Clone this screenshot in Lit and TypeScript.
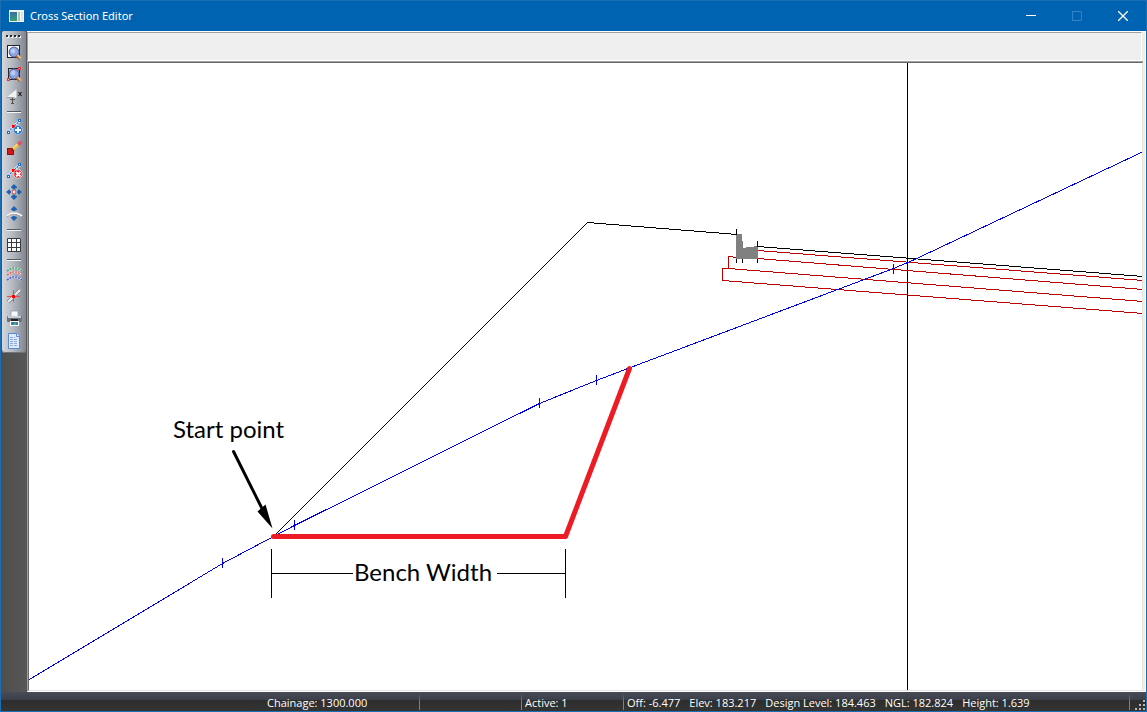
import { LitElement, html, svg, css, SVGTemplateResult } from "lit";
import { customElement } from "lit/decorators.js";

type Tool = { label: string; icon: SVGTemplateResult } | null;

const magnifier = svg`
  <circle cx="7" cy="7" r="4.800" fill="#8ea6e0" stroke="#5c6cb4" stroke-width="1.200"/>
  <circle cx="6" cy="6" r="2.400" fill="#b9cbf5"/>
  <path d="M10 10.500 13.500 14" stroke="#a86a3c" stroke-width="3.400"/>
  <path d="M10.500 10 14 13.500" stroke="#f0bd8c" stroke-width="1.800"/>`;

const node = (x: number, y: number, c = "#1c6fd0") =>
  svg`<rect x=${x} y=${y} width="2" height="2" fill="#fff" stroke=${c}/>`;

const segments = svg`
  <path d="M1 13 7 7 13 2" fill="none" stroke="#e8f0fa" stroke-width="2.400"/>
  <path d="M1 13 7 7 13 2" fill="none" stroke="#1c6fd0" stroke-width="1.200" stroke-dasharray="2 1"/>
  ${node(0.5, 12.5)}${node(11.5, 0.5)}
  <rect x="5" y="6" width="3" height="3" fill="#f00"/>`;

const wave = (y: number, c: string) => svg`
  <path d=${`M0 ${y + 4} 5 ${y + 1} 10 ${y + 1} 15 ${y + 4}`} fill="none" stroke="#e0e0e6" stroke-width="2.200"/>
  <path d=${`M0 ${y + 4} 5 ${y + 1} 10 ${y + 1} 15 ${y + 4}`} fill="none" stroke=${c} stroke-width="1.600" stroke-dasharray="2 1"/>`;

const tools: Tool[] = [
  {
    label: "Zoom window",
    icon: svg`<rect x=".5" y=".5" width="12" height="12" fill="#fff" stroke="#222"/>${magnifier}`,
  },
  {
    label: "Zoom extents",
    icon: svg`<rect x="1.500" y="1.500" width="11" height="11" fill="none" stroke="#222"/>${magnifier}
      <rect x="11" y="0" width="3" height="3" fill="#e8303a"/><rect x="12" y="1" width="1" height="1" fill="#ffb0b0"/>
      <rect x="0" y="11" width="3" height="3" fill="#e8303a"/><rect x="1" y="12" width="1" height="1" fill="#ffb0b0"/>`,
  },
  {
    label: "Section view",
    icon: svg`<path d="M0 8 10 0V10L6 9Z" fill="#f2f2f2"/><path d="M0 8.500H6L10 10V0" fill="none" stroke="#8a8c90" stroke-width=".8"/>
      <path d="M5.500 9V14M3 10.500H8M4 14.500H7" stroke="#555" stroke-width="1.200"/>
      <path d="M11.500 3 14.500 7M14.500 3 11.500 7" stroke="#222" stroke-width="1.200"/>`,
  },
  null,
  {
    label: "Add point",
    icon: svg`${segments}<circle cx="11" cy="11" r="4.500" fill="#2476d8" stroke="#a9cdf5" stroke-width=".8"/>
      <path d="M11 8V14M8 11H14" stroke="#fff" stroke-width="1.800"/>`,
  },
  {
    label: "Edit point",
    icon: svg`<rect x="0" y="7" width="7" height="7" fill="#8c1010"/><rect x="1" y="8" width="5" height="5" fill="#d81818"/>
      <path d="M4 10 6 6 8 9Z" fill="#5a3010"/><path d="M6 8 12 3" stroke="#f5bd45" stroke-width="3.500"/>
      <path d="M6 7 11 2.500" stroke="#fff0a0" stroke-width="1"/><path d="M11 3.500 14.500 1" stroke="#e05068" stroke-width="3.500"/>`,
  },
  {
    label: "Delete point",
    icon: svg`${segments}<path d="M8 7H13L15 9V13L13 15H9L7 13V9Z" fill="#e01820" stroke="#fff" stroke-width=".6"/>
      <path d="M9 9 13.500 13.500M13.500 9 9 13.500" stroke="#fff" stroke-width="1.800"/>`,
  },
  {
    label: "Move",
    icon: svg`<g fill="#1d62b4"><path d="M7 -1 10 2V3H8.500V4.500H5.500V3H4V2Z"/><path d="M7 15 10 12V11H8.500V9.500H5.500V11H4V12Z"/>
      <path d="M-1 7 2 4.500H3V6H4V8H3V9.500H2Z"/><path d="M15 7 12 4.500H11V6H10V8H11V9.500H12Z"/></g>
      <rect x="5.500" y="5.500" width="3" height="3" fill="#fff" stroke="#f26a6a"/>`,
  },
  {
    label: "Move vertically",
    icon: svg`<g fill="#1d62b4"><path d="M7 -1 10 2V3H8.500V4H5.500V3H4V2Z"/><path d="M7 14 10 11V10H8.500V9H5.500V10H4V11Z"/></g>
      <path d="M0 9 4 6.500H10L15 9" fill="none" stroke="#f4f4f4" stroke-width="2"/>
      <path d="M0 10 4 7.500H10L15 10" fill="none" stroke="#888" stroke-width=".8" stroke-dasharray="2 1"/>`,
  },
  null,
  {
    label: "Grid",
    icon: svg`<rect x="1" y="1" width="13" height="13" fill="#fff"/>
      <path d="M.5 1.500H13.500V14.500H.5ZM4.500 1V15M9.500 1V15M0 5.500H14M0 10.500H14" fill="none" stroke="#3a3a3e"/>`,
  },
  null,
  { label: "Layers", icon: svg`${wave(0, "#3aa860")}${wave(4, "#e86060")}${wave(9, "#4858d0")}` },
  {
    label: "Snap",
    icon: svg`<path d="M1 13 13 1" stroke="#777" stroke-width="3.600"/><path d="M1 13 13 1" stroke="#e8e8e8" stroke-width="2.400"/>
      <path d="M6.500 1V13M0 7.500H13" stroke="#f04848"/><rect x="5" y="6" width="3" height="3" fill="#f00"/>`,
  },
  {
    label: "Print",
    icon: svg`<rect x="4" y="0" width="7" height="6" fill="#f4f8ff" stroke="#8c9cb8" stroke-width=".8"/>
      <rect x="0" y="5" width="15" height="6" rx="1" fill="#6c7078"/><rect x="1" y="5" width="13" height="2" fill="#c8ccd4"/>
      <rect x="4" y="8" width="7" height="2" fill="#222"/><rect x="3" y="10" width="9" height="5" fill="#fff"/>
      <rect x="4" y="11" width="7" height="3" fill="#3c7cb0"/><rect x="7" y="12" width="2" height="2" fill="#48b078"/>`,
  },
  {
    label: "Report",
    icon: svg`<path d="M1.500 .5H9.500L12.500 3.500V15.500H1.500Z" fill="#dce9ff" stroke="#5c88d8"/>
      <path d="M9.500 .5V3.500H12.500" fill="#fff" stroke="#5c88d8"/>
      <path d="M3 4.500H8M3 6.500H11M3 8.500H11M3 10.500H11M3 12.500H11" stroke="#8ea8d8" stroke-dasharray="3 1"/>`,
  },
];

@customElement("section-canvas")
class SectionCanvas extends LitElement {
  static styles = css`
    :host { display: block; min-width: 0; min-height: 0; overflow: hidden; background: #fff; }
    .drawing { display: block; width: 100%; height: 100%; }
    .label { font: 24px Lato, "Open Sans", sans-serif; fill: #000; }
    .thin { fill: none; stroke-width: 1; shape-rendering: crispEdges; }
    .black { stroke: #000; }
    .red { stroke: #c00000; }
    .blue { stroke: #0000e6; }
    .bench { fill: none; stroke: #ed1c24; stroke-width: 5; stroke-linejoin: round; stroke-linecap: round; }
    .arrow { stroke: #000; stroke-width: 3; stroke-linecap: round; }
  `;

  render() {
    return html`
      <svg class="drawing" viewBox="29 63 1113 627" preserveAspectRatio="xMinYMin slice" role="img" aria-label="Cross section">
        <g transform="translate(.5 .5)">
          <path class="thin black" d="M907 62V691M274 535 587 222 737 234M757 246 1143 276"/>
          <path class="thin red" d="M757 250 1143 280M757 258 1143 289M737 257 728 256V268M1143 301 728 268H722V280L1143 313"/>
          <path class="thin blue" d="M29 679 222 563 273 536 294 525 539 403 596 380 630 367 893 268 912 260 1143 151
            M222 557V567M294 519V529M539 397V407M596 374V384M893 263V273"/>
          <path fill="#808080" d="M736 234H741V241H742V248L757 246V258H736Z" stroke="#808080" shape-rendering="crispEdges"/>
          <path class="thin black" d="M736 228V234M736 258V262M742 258V262M757 258V262M757 240V246"/>
          <path class="bench" d="M273 536H565L629 368"/>
          <path class="arrow" d="M233 451 263 511"/>
          <path d="M272 528 257 511 265 504Z"/>
          <path class="thin black" d="M271 548V597M565 548V597M271 573H352M496 573H565"/>
        </g>
        <text class="label" x="173" y="438">Start point</text>
        <text class="label" x="354" y="581">Bench Width</text>
      </svg>
    `;
  }
}

@customElement("app-root")
class AppRoot extends LitElement {
  static styles = css`
    :host {
      display: flex; flex-direction: column; box-sizing: border-box; height: 100vh;
      border: 1px solid #1a6fb4; overflow: hidden;
      font: 11px/16px "Open Sans", "Noto Sans", sans-serif; background: #505050;
    }
    .title { display: flex; align-items: center; height: 30px; flex: none; background: #0063b1; color: #fff; }
    .app-icon { width: 16px; height: 16px; margin: 0 6px 0 7px; flex: none; }
    .caption { flex: 1; margin: 0; font: 11px/16px "Noto Sans", sans-serif; }
    .win { width: 46px; height: 30px; padding: 0; border: 0; background: none; color: #fff; display: grid; place-items: center; }
    .win:disabled { color: #3384c4; }
    .win:hover:enabled { background: #1a73bb; }
    .body { flex: 1; min-height: 0; display: flex; }
    .rail { width: 26px; flex: none; background: linear-gradient(90deg, #4e4e4e, #575757); }
    .tools {
      display: flex; flex-direction: column; margin: 0 1px; padding: 4px 0 1px; border-radius: 2px 2px 3px 3px;
      background: linear-gradient(90deg, #d4d7dc, #b4b8c0 45%, #81858f);
      box-shadow: inset 0 -1px #6e727a;
    }
    .grip { width: 16px; height: 7px; margin-left: 4px; flex: none; }
    .tool { height: 22px; padding: 0 0 0 2px; border: 0; background: none; display: grid; place-items: center; }
    .tool:hover { background: #ffffff66; }
    .rule { height: 8px; display: grid; align-items: center; padding: 0 5px; }
    .line { height: 2px; box-sizing: border-box; border-top: 1px solid #555960; background: #f4f4f4; }
    .work { flex: 1; min-width: 0; display: flex; flex-direction: column; background: #efefef; border-top: 1px solid #fff; border-right: 1px solid #fff; }
    .strip { height: 29px; box-sizing: border-box; flex: none; margin-right: 3px; border: 1px solid #fff; border-top-color: #a0a0a0; border-left-color: #a0a0a0; background: #efefef; }
    .frame { flex: 1; min-height: 0; display: flex; margin-right: 2px; border: 1px solid #fff; border-top-color: #a0a0a0; border-left-color: #a0a0a0; border-right-width: 0; }
    .inner { flex: 1; min-width: 0; display: flex; border: 1px solid #e3e3e3; border-top-color: #696969; border-left-color: #696969; }
    .canvas { flex: 1; }
    .status {
      height: 19px; flex: none; display: grid; grid-template-columns: 419px 102px 102px 1fr 16px;
      color: #fff; white-space: nowrap; font-size: 11px; line-height: 22px;
      background: linear-gradient(#484b56, #3c404b 40%, #2d2d2d 42%, #343434);
    }
    .cell { box-sizing: border-box; padding-left: 3px; overflow: hidden; background: linear-gradient(#484b56, #808080 50%, #808080) right / 1px 16px no-repeat; }
    .chainage { padding-left: 266px; }
    .values { display: flex; gap: 9px; }
    .size-grip { align-self: end; justify-self: end; }
  `;

  render() {
    return html`
      <header class="title">
        <svg class="app-icon" viewBox="0 0 16 16" aria-hidden="true">
          <defs>
            <linearGradient id="pane" x2="0" y2="1">
              <stop stop-color="#3a6ca0"/><stop offset="1" stop-color="#3aa070"/>
            </linearGradient>
          </defs>
          <rect x="1" y="2" width="15" height="12" fill="#f2f2f0"/>
          <rect x="2" y="4" width="7" height="9" fill="url(#pane)"/>
          <rect x="10" y="4" width="2" height="9" fill="#a8c4b8"/>
          <rect x="13" y="4" width="2" height="9" fill="#dfe4e0"/>
        </svg>
        <h1 class="caption">Cross Section Editor</h1>
        <button class="win" aria-label="Minimize"><svg width="10" height="10"><path d="M0 4.500H10" stroke="currentColor"/></svg></button>
        <button class="win" aria-label="Maximize" disabled><svg width="10" height="10"><path d="M.5 .5H9.500V9.500H.5Z" fill="none" stroke="currentColor"/></svg></button>
        <button class="win" aria-label="Close"><svg width="10" height="10"><path d="M0 0 10 10M10 0 0 10" stroke="currentColor" stroke-width="1.300"/></svg></button>
      </header>
      <div class="body">
        <aside class="rail">
          <div class="tools" role="toolbar" aria-label="Section tools" aria-orientation="vertical">
            <svg class="grip" viewBox="0 0 16 7" aria-hidden="true">
              <path d="M1 2H16" stroke="#fff" stroke-width="2" stroke-dasharray="2 2"/>
              <path d="M0 1H15" stroke="#26282c" stroke-width="2" stroke-dasharray="2 2"/>
            </svg>
            ${tools.map((t) =>
              t
                ? html`<button class="tool" aria-label=${t.label} title=${t.label}>
                    <svg width="16" height="16" viewBox="0 0 16 16" overflow="visible">${t.icon}</svg>
                  </button>`
                : html`<div class="rule" role="separator"><div class="line"></div></div>`
            )}
          </div>
        </aside>
        <main class="work">
          <div class="strip"></div>
          <div class="frame"><div class="inner"><section-canvas class="canvas"></section-canvas></div></div>
        </main>
      </div>
      <footer class="status">
        <div class="cell chainage">Chainage: 1300.000</div>
        <div class="cell"></div>
        <div class="cell">Active: 1</div>
        <div class="cell values">
          <span>Off: -6.477</span><span>Elev: 183.217</span><span>Design Level: 184.463</span><span>NGL: 182.824</span><span>Height: 1.639</span>
        </div>
        <svg class="size-grip" width="12" height="12" aria-hidden="true">
          <path d="M9 1h2v2H9zM5 5h2v2H5zM9 5h2v2H9zM1 9h2v2H1zM5 9h2v2H5zM9 9h2v2H9z" fill="#b8b8b8"/>
        </svg>
      </footer>
    `;
  }
}
